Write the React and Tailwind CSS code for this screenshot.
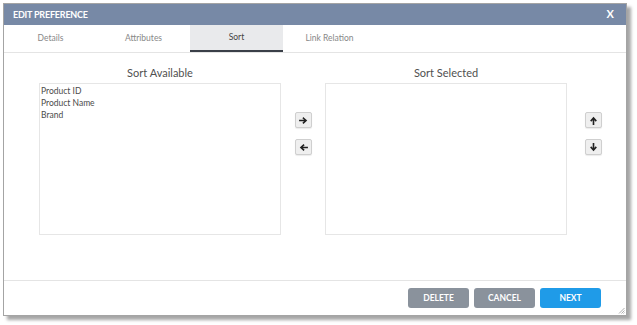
import { useState } from "react";

const tabs = ["Details", "Attributes", "Sort", "Link Relation"];

function ArrowBtn({ dir }) {
  const paths = {
    right: "M1 5h6M5 2.5L7.8 5 5 7.5",
    left: "M9 5H3M5 2.5L2.2 5 5 7.5",
    up: "M5 9V3M2.5 5L5 2.2 7.5 5",
    down: "M5 1v6M2.5 5L5 7.8 7.5 5",
  };
  return (
    <button className="w-[17px] h-[16px] flex items-center justify-center bg-[#efefef] border border-[#cfcfcf] rounded-[2px] shadow-[0_1px_1px_rgba(0,0,0,0.08)]">
      <svg width="9" height="9" viewBox="0 0 10 10" fill="none" stroke="#222" strokeWidth="1.8" strokeLinecap="square">
        <path d={paths[dir]} />
      </svg>
    </button>
  );
}

function ListBox({ title, items }) {
  return (
    <div className="flex flex-col w-[242px]">
      <h3 className="text-[11px] text-[#505050] text-center h-[14px] leading-[14px] mt-[1px] mb-[3px]">{title}</h3>
      <div className="h-[152px] border border-[#e6e6e6] bg-white px-[1px] pt-[1px]">
        {items.map((it) => (
          <div key={it} className="text-[8.5px] leading-[12px] text-[#4a4a4a]">
            {it}
          </div>
        ))}
      </div>
    </div>
  );
}

export default function App() {
  const [active, setActive] = useState("Sort");

  return (
    <div className="w-[637px] h-[325px] bg-white pt-[3px] pl-[3px]" style={{ fontFamily: "Lato, 'Open Sans', sans-serif" }}>
      <div className="relative w-[624px] h-[313px] bg-white border border-[#a4a4a4] shadow-[4px_4px_3px_rgba(0,0,0,0.35)] flex flex-col">
        {/* header */}
        <div className="h-[21px] bg-[#7789a6] flex items-center justify-between pl-[9px] pr-[12px] shrink-0">
          <span className="text-white text-[9px] font-bold tracking-[-0.2px]">EDIT PREFERENCE</span>
          <span className="text-white text-[11px] font-bold">X</span>
        </div>

        {/* tabs */}
        <div className="h-[28px] flex border-b border-[#e4e4e4] shrink-0">
          {tabs.map((t) => (
            <button
              key={t}
              onClick={() => setActive(t)}
              className={
                t === active
                  ? "w-[93px] h-full text-[8.5px] text-[#444] bg-[#e9eaec] border-b-2 border-[#3a3f48]"
                  : "w-[93px] h-full text-[8.5px] text-[#888]"
              }
            >
              {t}
            </button>
          ))}
        </div>

        {/* body */}
        <div className="h-[227px] flex pl-[35px] pt-[12px] shrink-0">
          <ListBox title="Sort Available" items={["Product ID", "Product Name", "Brand"]} />
          <div className="w-[44px] flex flex-col items-center pt-[47px] gap-[11px]">
            <ArrowBtn dir="right" />
            <ArrowBtn dir="left" />
          </div>
          <ListBox title="Sort Selected" items={[]} />
          <div className="flex flex-col pl-[18px] pt-[47px] gap-[11px]">
            <ArrowBtn dir="up" />
            <ArrowBtn dir="down" />
          </div>
        </div>

        {/* footer */}
        <div className="flex-1 border-t border-[#e4e4e4] flex justify-end items-start pt-[7px] pr-[25px] gap-[5px]">
          <button className="w-[61px] h-[20px] rounded-[3px] bg-[#8a929c] text-white text-[8.5px] font-bold">DELETE</button>
          <button className="w-[61px] h-[20px] rounded-[3px] bg-[#8a929c] text-white text-[8.5px] font-bold">CANCEL</button>
          <button className="w-[61px] h-[20px] rounded-[3px] bg-[#1f9be8] text-white text-[8.5px] font-bold">NEXT</button>
        </div>

        <svg className="absolute right-[1px] bottom-[1px]" width="7" height="7" viewBox="0 0 7 7" stroke="#999" strokeWidth="0.8">
          <path d="M1 6.5L6.5 1M3.5 6.5L6.5 3.5M5.5 6.5L6.5 5.5" />
        </svg>
      </div>
    </div>
  );
}
